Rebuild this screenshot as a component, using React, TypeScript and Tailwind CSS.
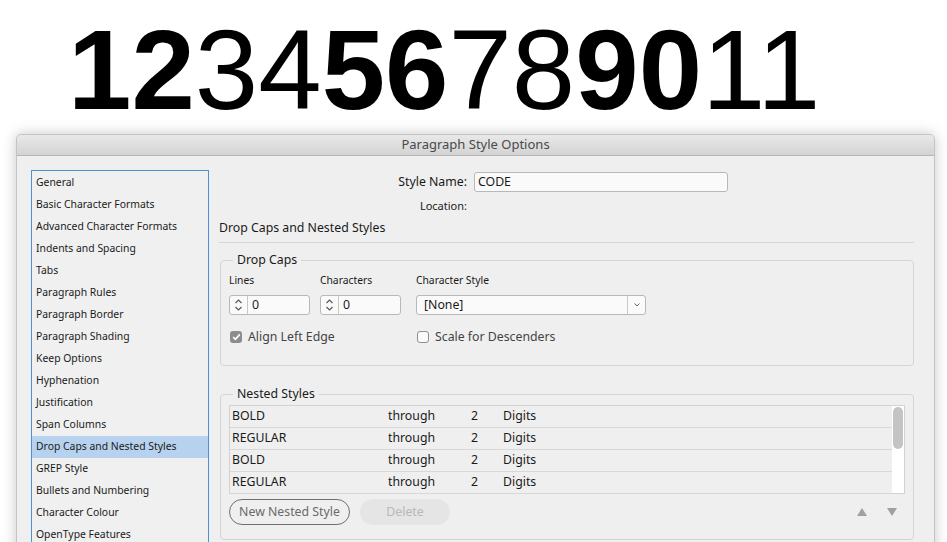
import React from "react";

const listItems = [
  "General",
  "Basic Character Formats",
  "Advanced Character Formats",
  "Indents and Spacing",
  "Tabs",
  "Paragraph Rules",
  "Paragraph Border",
  "Paragraph Shading",
  "Keep Options",
  "Hyphenation",
  "Justification",
  "Span Columns",
  "Drop Caps and Nested Styles",
  "GREP Style",
  "Bullets and Numbering",
  "Character Colour",
  "OpenType Features",
];

const rows = [
  ["BOLD", "through", "2", "Digits"],
  ["REGULAR", "through", "2", "Digits"],
  ["BOLD", "through", "2", "Digits"],
  ["REGULAR", "through", "2", "Digits"],
];

function Spinner({ value }: { value: string }) {
  return (
    <div className="flex h-[20px] w-[81px] rounded-[3px] border border-[#b8b8b8] bg-[#fafafa]">
      <div className="flex w-[18px] flex-col items-center justify-center border-r border-[#c8c8c8]">
        <svg width="9" height="14" viewBox="0 0 9 14" fill="none" stroke="#555" strokeWidth="1.1">
          <path d="M1.5 5 L4.5 2 L7.5 5" />
          <path d="M1.5 9 L4.5 12 L7.5 9" />
        </svg>
      </div>
      <div className="flex items-center pl-[4px] text-[12.3px] text-[#1a1a1a]">{value}</div>
    </div>
  );
}

export default function App() {
  const font = { fontFamily: '"Noto Sans", "DejaVu Sans", sans-serif' };
  return (
    <div className="relative h-[542px] w-[947px] overflow-hidden bg-white" style={font}>
      <div
        className="h-[134px] pl-[68px] pt-[12px] text-[114px] leading-[115px] text-black"
        style={{ fontFamily: '"Liberation Sans", Arial, sans-serif' }}
      >
        <span className="font-bold">12</span>
        <span>34</span>
        <span className="font-bold">56</span>
        <span>78</span>
        <span className="font-bold">90</span>
        <span>11</span>
      </div>

      <div className="ml-[16px] h-[420px] w-[919px] rounded-t-[5px] border border-[#c4c4c4] bg-[#efefef] shadow-[0_0_14px_rgba(0,0,0,0.22)]">
        <div className="flex h-[21px] items-center justify-center rounded-t-[5px] border-b border-[#b5b5b5] bg-gradient-to-b from-[#e9e9e9] to-[#d3d3d3] text-[13px] text-[#4a4a4a]">
          Paragraph Style Options
        </div>

        <div className="flex pl-[14px] pt-[14px]">
          <div className="h-[400px] w-[178px] shrink-0 border border-[#4a8fd8] bg-[#f0f0f0] pt-[1px]">
            {listItems.map((item) => (
              <div
                key={item}
                className={
                  "flex h-[22px] items-center pl-[4px] text-[10.4px] text-[#1a1a1a] " +
                  (item === "Drop Caps and Nested Styles" ? "bg-[#b7d2ef]" : "")
                }
              >
                {item}
              </div>
            ))}
          </div>

          <div className="ml-[10px] mt-[2px] w-[695px] text-[12.3px] text-[#1a1a1a]">
            <div className="flex items-center">
              <div className="w-[248px] text-right">Style Name:</div>
              <div className="ml-[7px] flex h-[20px] w-[254px] items-center rounded-[3px] border border-[#b8b8b8] bg-[#fafafa] pl-[3px]">
                CODE
              </div>
            </div>
            <div className="mt-[4px] flex h-[20px] items-center">
              <div className="w-[248px] text-right text-[11px]">Location:</div>
            </div>
            <div className="mt-[2px] flex h-[20px] items-center">Drop Caps and Nested Styles</div>
            <div className="mt-[4px] h-px w-full bg-[#d6d6d6]" />

            <fieldset className="mt-[8px] ml-[1px] h-[115px] rounded-[4px] border border-[#d4d4d4] px-[8px]">
              <legend className="ml-[4px] px-[4px] text-[12.3px] leading-[18px]">Drop Caps</legend>
              <div className="flex pt-[3px]">
                <div className="w-[91px]">
                  <div className="h-[16px] text-[10.3px] leading-[16px]">Lines</div>
                  <div className="mt-[7px]"><Spinner value="0" /></div>
                </div>
                <div className="w-[96px]">
                  <div className="h-[16px] text-[10.3px] leading-[16px]">Characters</div>
                  <div className="mt-[7px]"><Spinner value="0" /></div>
                </div>
                <div>
                  <div className="h-[16px] text-[10.3px] leading-[16px]">Character Style</div>
                  <div className="mt-[7px] flex h-[20px] w-[230px] rounded-[3px] border border-[#b8b8b8] bg-[#fafafa]">
                    <div className="flex flex-1 items-center pl-[7px]">[None]</div>
                    <div className="flex w-[18px] items-center justify-center border-l border-[#c8c8c8]">
                      <svg width="8" height="6" viewBox="0 0 8 6" fill="none" stroke="#666" strokeWidth="1">
                        <path d="M1.5 1.5 L4 4 L6.5 1.5" />
                      </svg>
                    </div>
                  </div>
                </div>
              </div>
              <div className="mt-[13px] flex items-center">
                <div className="flex w-[187px] items-center">
                  <div className="ml-[1px] flex h-[12px] w-[12px] items-center justify-center rounded-[3px] bg-[#8c8c8c]">
                    <svg width="9" height="8" viewBox="0 0 9 8" fill="none" stroke="white" strokeWidth="1.6">
                      <path d="M1.2 4.2 L3.4 6.3 L7.8 1.4" />
                    </svg>
                  </div>
                  <span className="ml-[6px] text-[#444]">Align Left Edge</span>
                </div>
                <div className="flex items-center">
                  <div className="ml-[1px] h-[12px] w-[12px] rounded-[3px] border border-[#8f8f8f] bg-[#fafafa]" />
                  <span className="ml-[6px] text-[#444]">Scale for Descenders</span>
                </div>
              </div>
            </fieldset>

            <fieldset className="mt-[19px] ml-[1px] h-[155px] rounded-[4px] border border-[#d4d4d4] px-[8px]">
              <legend className="ml-[4px] px-[4px] text-[12.3px] leading-[18px]">Nested Styles</legend>
              <div className="mt-[2px] flex h-[89px] border border-[#d2d2d2] bg-[#efefef]">
                <div className="flex-1">
                  {rows.map((r, i) => (
                    <div key={i} className="flex h-[22px] items-center border-b border-[#d8d8d8] pl-[2px]">
                      <div className="w-[156px]">{r[0]}</div>
                      <div className="w-[83px]">{r[1]}</div>
                      <div className="w-[32px]">{r[2]}</div>
                      <div>{r[3]}</div>
                    </div>
                  ))}
                </div>
                <div className="w-[12px] bg-white pt-[1px]">
                  <div className="mx-auto h-[42px] w-[10px] rounded-[5px] bg-[#c4c4c4]" />
                </div>
              </div>
              <div className="mt-[5px] flex items-center">
                <div className="flex h-[26px] w-[121px] items-center justify-center rounded-full border border-[#6e6e6e] text-[#6a6a6a]">
                  New Nested Style
                </div>
                <div className="ml-[10px] flex h-[26px] w-[90px] items-center justify-center rounded-full bg-[#e5e5e5] text-[#b8b8b8]">
                  Delete
                </div>
                <div className="ml-auto mr-[8px] flex items-center gap-[20px]">
                  <svg width="10" height="8" viewBox="0 0 10 8"><path d="M5 0 L10 8 L0 8 Z" fill="#a0a0a0" /></svg>
                  <svg width="10" height="8" viewBox="0 0 10 8"><path d="M0 0 L10 0 L5 8 Z" fill="#a0a0a0" /></svg>
                </div>
              </div>
            </fieldset>
          </div>
        </div>
      </div>
    </div>
  );
}
